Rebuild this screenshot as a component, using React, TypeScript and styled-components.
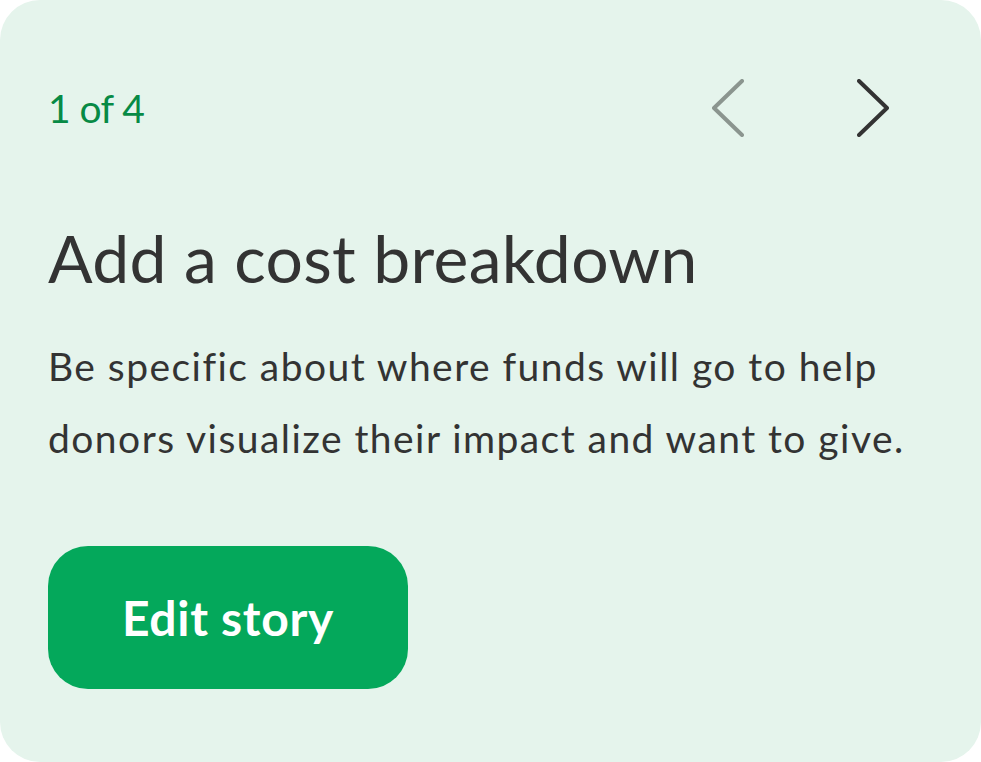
import React from "react";
import styled, { createGlobalStyle } from "styled-components";

const Global = createGlobalStyle`
  html, body { margin: 0; padding: 0; background: #ffffff; }
  * { box-sizing: border-box; }
`;

const Card = styled.section`
  width: 981px;
  height: 762px;
  border-radius: 40px;
  background: #e5f4ec;
  padding: 0 40px 0 48px;
  display: flex;
  flex-direction: column;
  align-items: flex-start;
  font-family: "Lato", "Noto Sans", sans-serif;
  color: #333333;
`;

const Header = styled.div`
  align-self: stretch;
  margin-top: 79px;
  padding-right: 52px;
  height: 58px;
  display: flex;
  align-items: center;
  justify-content: space-between;
`;

const Counter = styled.span`
  font-size: 39px;
  color: #078a45;
  letter-spacing: -0.6px;
  line-height: 1;
`;

const Nav = styled.div`
  display: flex;
  gap: 113px;
`;

const NavButton = styled.button<{ $muted?: boolean }>`
  border: 0;
  padding: 0;
  background: transparent;
  width: 32px;
  height: 58px;
  display: flex;
  color: ${(p) => (p.$muted ? "#8b958f" : "#333333")};
  cursor: pointer;
`;

const Title = styled.h2`
  margin: 81px 0 0;
  font-size: 66px;
  font-weight: 400;
  line-height: 80px;
  letter-spacing: 0.3px;
`;

const Body = styled.p`
  margin: 32px 0 0;
  font-size: 39px;
  line-height: 72px;
  letter-spacing: 1.45px;
`;

const EditButton = styled.button`
  margin-top: 72px;
  width: 360px;
  height: 143px;
  border: 0;
  border-radius: 40px;
  background: #04a85b;
  color: #ffffff;
  font-family: "Lato", "Noto Sans", sans-serif;
  font-weight: 700;
  font-size: 48px;
  letter-spacing: 0.7px;
  cursor: pointer;
`;

const Chevron = ({ dir }: { dir: "left" | "right" }) => (
  <svg width="32" height="58" viewBox="0 0 32 58" fill="none">
    <polyline
      points={dir === "left" ? "30,2 2,29 30,56" : "2,2 30,29 2,56"}
      stroke="currentColor"
      strokeWidth="4"
      strokeLinecap="round"
      strokeLinejoin="round"
    />
  </svg>
);

export default function App() {
  return (
    <>
      <Global />
      <Card>
        <Header>
          <Counter>1 of 4</Counter>
          <Nav>
            <NavButton $muted aria-label="Previous">
              <Chevron dir="left" />
            </NavButton>
            <NavButton aria-label="Next">
              <Chevron dir="right" />
            </NavButton>
          </Nav>
        </Header>
        <Title>Add a cost breakdown</Title>
        <Body>
          Be specific about where funds will go to help
          <br />
          donors visualize their impact and want to give.
        </Body>
        <EditButton>Edit story</EditButton>
      </Card>
    </>
  );
}
